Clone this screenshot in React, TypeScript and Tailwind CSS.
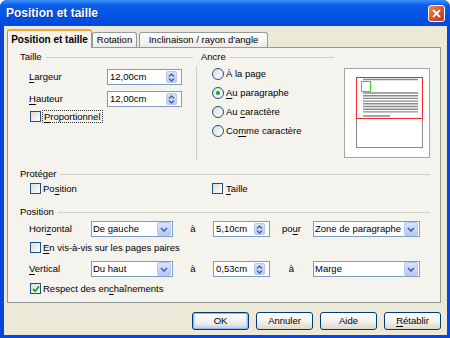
import type { ReactNode } from "react";

const ui = "font-['Liberation_Sans',Arial,sans-serif] text-[9.5px] leading-none text-black";

function U({ children }: { children: ReactNode }) {
  return <span className="underline underline-offset-[1.5px]">{children}</span>;
}

function Header({ label }: { label: string }) {
  return (
    <div className="flex h-[12px] items-center">
      <span>{label}</span>
      <span className="ml-[4px] h-px flex-1 bg-[#d0d0bf]" />
    </div>
  );
}

function Check({ checked }: { checked?: boolean }) {
  return (
    <span className="flex h-[11px] w-[11px] shrink-0 items-center justify-center border border-[#1c5180] bg-linear-to-br from-[#dcdcd7] to-white">
      {checked && (
        <svg width="8" height="8" viewBox="0 0 8 8">
          <path d="M1 3.8 L3.2 6.2 L7 1.4" stroke="#21a121" strokeWidth="1.8" fill="none" />
        </svg>
      )}
    </span>
  );
}

function Radio({ checked }: { checked?: boolean }) {
  return (
    <span className="flex h-[12px] w-[12px] shrink-0 items-center justify-center rounded-full border border-[#1c5180] bg-linear-to-br from-[#dcdcd7] to-white">
      {checked && <span className="h-[4px] w-[4px] rounded-full bg-[#21a121]" />}
    </span>
  );
}

function Spin({ value, className }: { value: string; className: string }) {
  return (
    <div className={`flex h-[16px] items-center border border-[#7f9db9] bg-white pl-[2px] pr-[4px] ${className}`}>
      <span className="flex-1">{value}</span>
      <span className="flex h-[12px] w-[11px] flex-col items-center justify-center gap-[1px] rounded-[2px] border border-[#b4c8f3] bg-linear-to-b from-[#d6e2fd] to-[#b8cbf7]">
        <svg width="7" height="4" viewBox="0 0 7 4">
          <path d="M1 3.5 L3.5 1 L6 3.5" stroke="#4d6185" strokeWidth="1.3" fill="none" />
        </svg>
        <svg width="7" height="4" viewBox="0 0 7 4">
          <path d="M1 0.5 L3.5 3 L6 0.5" stroke="#4d6185" strokeWidth="1.3" fill="none" />
        </svg>
      </span>
    </div>
  );
}

function Select({ value, className }: { value: string; className: string }) {
  return (
    <div className={`flex h-[16px] items-center border border-[#7f9db9] bg-white pl-[1px] pr-px ${className}`}>
      <span className="flex-1">{value}</span>
      <span className="flex h-[14px] w-[14px] items-center justify-center rounded-[2px] border border-[#b4c8f3] bg-linear-to-b from-[#d6e2fd] to-[#b4c8f6]">
        <svg width="8" height="5" viewBox="0 0 8 5">
          <path d="M1 1 L4 4 L7 1" stroke="#4d6185" strokeWidth="1.6" fill="none" />
        </svg>
      </span>
    </div>
  );
}

function Button({ children, primary }: { children: ReactNode; primary?: boolean }) {
  return (
    <button
      type="button"
      className={`flex h-[18px] w-[57px] items-center justify-center rounded-[3px] border border-[#003c74] bg-linear-to-b from-white via-[#f3f2ee] to-[#dcd8cc] ${
        primary ? "shadow-[inset_0_0_0_1px_#9ab6ee,inset_0_-1px_0_2px_#c4d6f7]" : ""
      }`}
    >
      {children}
    </button>
  );
}

function Preview() {
  const ys = [25, 27.7, 30.4, 33.1, 35.8, 38.5, 41.2, 43.9];
  return (
    <svg width="86" height="90" viewBox="0 0 86 90" className="block">
      <rect x="0.5" y="0.5" width="85" height="89" fill="#fff" stroke="#a5a5a5" />
      <rect x="12.5" y="9.5" width="66" height="70" fill="#fff" stroke="#8a8a8a" />
      <line x1="19" y1="11.5" x2="74" y2="11.5" stroke="#8a8a8a" strokeWidth="1.4" />
      {ys.map((y) => (
        <line key={y} x1="19" y1={y} x2="74" y2={y} stroke="#8a8a8a" strokeWidth="1.4" />
      ))}
      <line x1="19" y1="48" x2="46" y2="48" stroke="#8a8a8a" strokeWidth="1.4" />
      <rect x="12.5" y="9.5" width="66" height="41" fill="none" stroke="#f02828" />
      <rect x="17.5" y="13.5" width="9" height="10" fill="none" stroke="#2bd92b" />
    </svg>
  );
}

export default function App() {
  return (
    <div className={`flex h-[338px] w-[450px] flex-col overflow-hidden rounded-t-[7px] bg-[#0846d8] ${ui}`}>
      {/* title bar */}
      <div className="flex h-[26px] shrink-0 items-center bg-linear-to-b from-[#3d8ff6] via-[#0a5de9] via-20% to-[#0049dc] pl-[6px] pr-[5px]">
        <span className="text-[12px] font-bold text-white text-shadow-[1px_1px_0_#0b2a9a]">Position et taille</span>
        <span className="ml-auto flex h-[17px] w-[17px] items-center justify-center rounded-[3px] border border-white bg-linear-to-br from-[#ec8c6a] via-[#d9552d] to-[#bf3c1b]">
          <svg width="9" height="9" viewBox="0 0 9 9">
            <path d="M1 1 L8 8 M8 1 L1 8" stroke="#fff" strokeWidth="1.8" />
          </svg>
        </span>
      </div>

      {/* body */}
      <div className="mb-[3px] ml-[4px] mr-[3px] flex flex-1 flex-col bg-[#ece9d8] pl-[3px] pr-[6px] pt-[3px]">
        {/* tabs */}
        <div className="relative z-10 flex h-[18px] items-end">
          <div className="relative top-px flex h-[19px] w-[85px] items-center justify-center rounded-t-[3px] border border-b-0 border-[#919b9c] border-t-2 border-t-[#f2a53a] bg-[#f4f3ee] text-[10px] font-bold">
            Position et taille
          </div>
          <div className="flex h-[15px] w-[45px] items-center justify-center rounded-t-[3px] border border-b-0 border-[#919b9c] bg-linear-to-b from-white to-[#ecebe6]">
            Rotation
          </div>
          <div className="ml-[2px] flex h-[15px] w-[129px] items-center justify-center rounded-t-[3px] border border-b-0 border-[#919b9c] bg-linear-to-b from-white to-[#ecebe6]">
            Inclinaison / rayon d'angle
          </div>
        </div>

        {/* panel */}
        <div className="flex h-[256px] flex-col border border-[#919b9c] bg-[#f4f3ee] pl-[12px] pr-[10px] pt-[3px]">
          <div className="flex h-[110px]">
            <div className="flex w-[173px] flex-col">
              <Header label="Taille" />
              <div className="mt-[6px] flex h-[16px] items-center pl-[9px]">
                <span className="w-[78px]">
                  <U>L</U>argeur
                </span>
                <Spin value="12,00cm" className="w-[75px]" />
              </div>
              <div className="mt-[6px] flex h-[16px] items-center pl-[9px]">
                <span className="w-[78px]">
                  <U>H</U>auteur
                </span>
                <Spin value="12,00cm" className="w-[75px]" />
              </div>
              <div className="mt-[4px] flex h-[11px] items-center pl-[10px]">
                <Check />
                <span className="ml-px border border-dotted border-[#333] px-px py-px">
                  <U>P</U>roportionnel
                </span>
              </div>
            </div>
            <div className="mb-px ml-[3px] mt-[15px] w-px bg-[#d0d0bf]" />
            <div className="ml-[4px] flex w-[133px] flex-col">
              <Header label="Ancre" />
              <div className="mt-[4px] flex flex-col gap-[5px] pl-[11px]">
                <div className="flex h-[14px] items-center gap-[2px]">
                  <Radio />
                  <span>À la page</span>
                </div>
                <div className="flex h-[14px] items-center gap-[2px]">
                  <Radio checked />
                  <span>
                    <U>A</U>u paragraphe
                  </span>
                </div>
                <div className="flex h-[14px] items-center gap-[2px]">
                  <Radio />
                  <span>
                    Au <U>c</U>aractère
                  </span>
                </div>
                <div className="flex h-[14px] items-center gap-[2px]">
                  <Radio />
                  <span>
                    Co<U>m</U>me caractère
                  </span>
                </div>
              </div>
            </div>
            <div className="ml-[10px] mt-[17px]">
              <Preview />
            </div>
          </div>

          <div className="mt-[7px]">
            <Header label="Protéger" />
          </div>
          <div className="mt-[3px] flex h-[11px] items-center pl-[10px]">
            <div className="flex w-[182px] items-center gap-[2px]">
              <Check />
              <span>
                Po<U>s</U>ition
              </span>
            </div>
            <div className="flex items-center gap-[3px]">
              <Check />
              <span>
                <U>T</U>aille
              </span>
            </div>
          </div>

          <div className="mt-[12px]">
            <Header label="Position" />
          </div>
          <div className="mt-[3px] flex h-[16px] items-center pl-[9px]">
            <span className="w-[62px]">
              Hori<U>z</U>ontal
            </span>
            <Select value="De gauche" className="w-[82px]" />
            <span className="w-[40px] text-center">à</span>
            <Spin value="5,10cm" className="w-[57px]" />
            <span className="w-[43px] text-center">
              po<U>u</U>r
            </span>
            <Select value="Zone de paragraphe" className="w-[107px]" />
          </div>
          <div className="mt-[5px] flex h-[11px] items-center gap-[2px] pl-[10px]">
            <Check />
            <span>
              <U>E</U>n vis-à-vis sur les pages paires
            </span>
          </div>
          <div className="mt-[8px] flex h-[16px] items-center pl-[9px]">
            <span className="w-[62px]">
              <U>V</U>ertical
            </span>
            <Select value="Du haut" className="w-[82px]" />
            <span className="w-[40px] text-center">à</span>
            <Spin value="0,53cm" className="w-[57px]" />
            <span className="w-[43px] text-center">à</span>
            <Select value="Marge" className="w-[107px]" />
          </div>
          <div className="mt-[6px] flex h-[11px] items-center gap-[2px] pl-[10px]">
            <Check checked />
            <span>
              Respect des en<U>c</U>haînements
            </span>
          </div>
        </div>

        {/* buttons */}
        <div className="mt-[9px] flex justify-end gap-[7px]">
          <Button primary>OK</Button>
          <Button>Annuler</Button>
          <Button>Aide</Button>
          <Button>
            <U>R</U>établir
          </Button>
        </div>
      </div>
    </div>
  );
}
